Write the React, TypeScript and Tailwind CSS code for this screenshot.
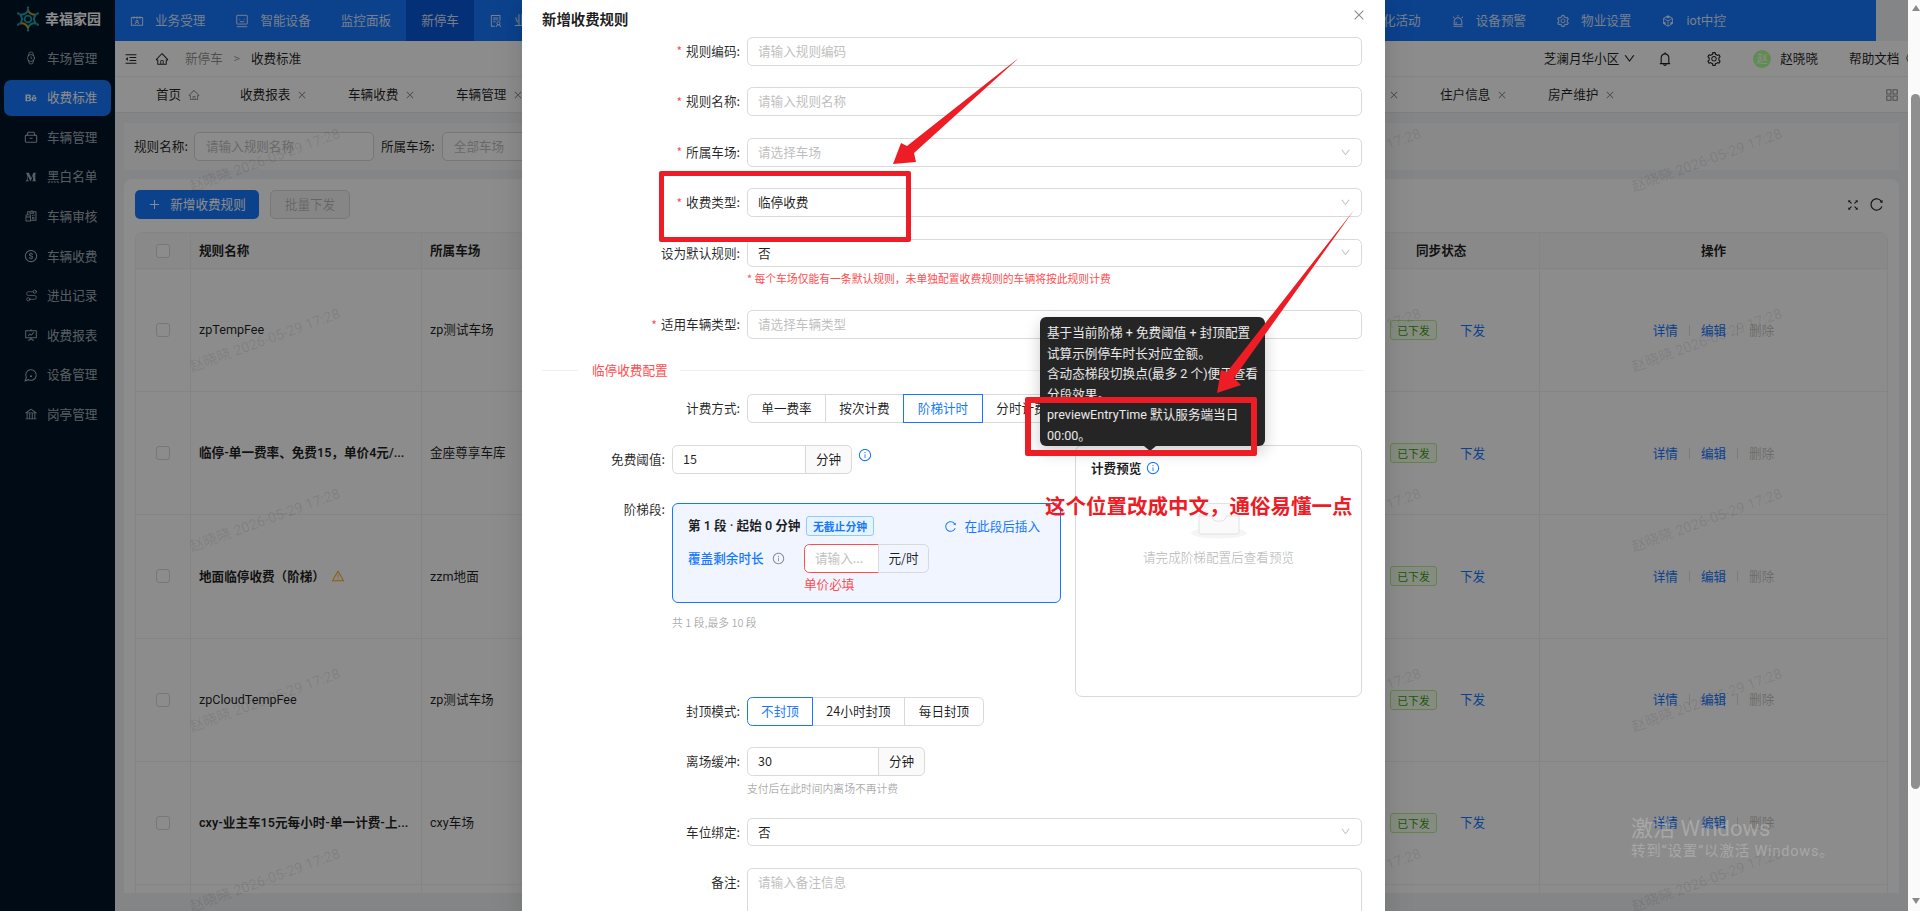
import type { ReactNode } from "react";
import {
  AiOutlineAlert, AiOutlineAppstore, AiOutlineBank, AiOutlineBehance, AiOutlineBell, AiOutlineCodeSandbox,
  AiOutlineClose, AiOutlineContacts, AiOutlineDollar, AiOutlineDown, AiOutlineFullscreen,
  AiOutlineFundProjectionScreen, AiOutlineHome, AiOutlineInfoCircle, AiOutlineMedium, AiOutlineMenuFold,
  AiOutlinePlus, AiOutlineReconciliation, AiOutlineReload,
  AiOutlineSetting, AiOutlineSolution, AiOutlineWarning,
} from "react-icons/ai";
import { Route as RouteIcon, Watch } from "lucide-react";

const latin = "font-['Roboto','Noto_Sans_CJK_SC',sans-serif]";

function CarIcon() {
  return (
    <svg width="14" height="14" viewBox="0 0 16 16" fill="none" stroke="currentColor" strokeWidth="1.2">
      <rect x="1.5" y="6" width="13" height="8" rx="1" />
      <path d="M3.5 6 L4.6 2.5 H11.4 L12.5 6 M6.3 9.5 H9.7" />
    </svg>
  );
}

function BubbleIcon() {
  return (
    <svg width="14" height="14" viewBox="0 0 24 24" fill="none" stroke="currentColor" strokeWidth="1.8">
      <path d="M7.9 20A9 9 0 1 0 4 16.1L2 22Z" />
      <circle cx="12" cy="14" r="0.8" fill="currentColor" />
    </svg>
  );
}

function FaceIcon() {
  return (
    <svg width="14" height="14" viewBox="0 0 16 16" fill="none" stroke="currentColor" strokeWidth="1.1">
      <rect x="2" y="1.5" width="12" height="10" rx="0.5" />
      <path d="M5 6 H5.8 M10.2 6 H11 M5.5 8.8 H10.5 M2 14.5 H14" />
    </svg>
  );
}

const sideItems = [
  { icon: <Watch size={14} strokeWidth={1.5} />, label: "车场管理" },
  { icon: <AiOutlineBehance size={14} />, label: "收费标准", active: true },
  { icon: <CarIcon />, label: "车辆管理" },
  { icon: <AiOutlineMedium size={14} />, label: "黑白名单" },
  { icon: <AiOutlineReconciliation size={14} />, label: "车辆审核" },
  { icon: <AiOutlineDollar size={14} />, label: "车辆收费" },
  { icon: <RouteIcon size={13} strokeWidth={1.5} />, label: "进出记录" },
  { icon: <AiOutlineFundProjectionScreen size={14} />, label: "收费报表" },
  { icon: <BubbleIcon />, label: "设备管理" },
  { icon: <AiOutlineBank size={14} />, label: "岗亭管理" },
];

const rows = [
  { name: "zpTempFee", lot: "zp测试车场" },
  { name: "临停-单一费率、免费15\uFF0C单价4元/...", lot: "金座尊享车库", bold: true },
  { name: "地面临停收费\uFF08阶梯\uFF09", lot: "zzm地面", bold: true, warn: true },
  { name: "zpCloudTempFee", lot: "zp测试车场" },
  { name: "cxy-业主车15元每小时-单一计费-上...", lot: "cxy车场", bold: true },
];

const marks = [160, 340, 520, 700, 880].flatMap((y) => [150, 511, 871, 1231, 1592].map((x) => ({ x, y })));

function Logo() {
  const petals = [0, 60, 120, 180, 240, 300];
  return (
    <svg width="26" height="26" viewBox="0 0 26 26" fill="none">
      <circle cx="13" cy="13" r="3.4" stroke="#1fa5ad" strokeWidth="1.8" />
      {petals.map((a, i) => (
        <path
          key={a}
          d="M8.6 5.4 Q13 8.6 17.4 5.4"
          stroke={i % 3 === 0 ? "#cf9a2e" : "#1fa5ad"}
          strokeWidth="2"
          strokeLinecap="round"
          transform={`rotate(${a + 30} 13 13)`}
        />
      ))}
      {petals.map((a) => (
        <circle key={a} cx="13" cy="1.8" r="1.2" fill="#1fa5ad" transform={`rotate(${a} 13 13)`} />
      ))}
    </svg>
  );
}

function Sidebar() {
  return (
    <aside className="w-[115px] shrink-0 bg-[#001529] text-[#ffffffa6]">
      <div className="h-[40px] pl-[15px] pt-[6px] flex items-start gap-[4px] text-white font-bold text-[14px]">
        <Logo />
        <span className="leading-[24px]">幸福家园</span>
      </div>
      <div className="px-[4px]">
        {sideItems.map((it) => (
          <div
            key={it.label}
            className={`h-[36px] mb-[3.6px] pl-[20px] flex items-center gap-[9px] rounded-[7px] ${it.active ? "bg-[#1677ff] text-white" : ""}`}
          >
            <span className="w-[14px] flex justify-center">{it.icon}</span>
            <span>{it.label}</span>
          </div>
        ))}
      </div>
    </aside>
  );
}

function NavItem({ icon, label, active }: { icon?: ReactNode; label: ReactNode; active?: boolean }) {
  return (
    <div className={`h-full px-[15px] flex items-center gap-[11px] whitespace-nowrap ${active ? "bg-[#0958d9]" : ""}`}>
      {icon}
      <span>{label}</span>
    </div>
  );
}

function TopNav() {
  return (
    <div className="h-[41px] w-[1761px] bg-[#1677ff] text-[#ffffffd9] flex justify-between pr-[135px]">
      <div className="flex">
        <NavItem icon={<AiOutlineContacts size={14} />} label="业务受理" />
        <NavItem icon={<FaceIcon />} label="智能设备" />
        <NavItem label="监控面板" />
        <NavItem label="新停车" active />
        <NavItem icon={<AiOutlineSolution size={14} />} label="业主服务" />
      </div>
      <div className="flex">
        <NavItem label="文化活动" />
        <NavItem icon={<AiOutlineAlert size={14} />} label="设备预警" />
        <NavItem icon={<AiOutlineSetting size={14} />} label="物业设置" />
        <NavItem icon={<AiOutlineCodeSandbox size={14} />} label={<span className={latin}>iot中控</span>} />
      </div>
    </div>
  );
}

function SubHeader() {
  return (
    <div className="h-[36px] bg-white border-b border-[#f0f0f0] flex items-center pl-[9px] whitespace-nowrap">
      <AiOutlineMenuFold size={14} className="text-[#000000d9]" />
      <AiOutlineHome size={14} className="ml-[17px] text-[#000000d9]" />
      <span className="ml-[16px] text-[#00000073]">新停车</span>
      <span className="ml-[11px] text-[#00000073] text-[11px]">&gt;</span>
      <span className="ml-[11px]">收费标准</span>
      <span className="ml-auto">芝澜月华小区</span>
      <AiOutlineDown size={13} className="ml-[4px]" />
      <AiOutlineBell size={16} className="ml-[21px]" />
      <AiOutlineSetting size={16} className="ml-[33px]" />
      <span className="ml-[31px] w-[18px] h-[18px] rounded-full bg-[#b0ff94] text-white text-[11px] flex items-center justify-center">赵</span>
      <span className="ml-[9px]">赵晓晓</span>
      <span className="ml-[31px] mr-[-4px]">帮助文档《</span>
    </div>
  );
}

function Tab({ label }: { label: string }) {
  return (
    <div className="w-[108px] pl-[24px] flex items-center gap-[7px]">
      <span>{label}</span>
      <AiOutlineClose size={10} className="text-[#00000073]" />
    </div>
  );
}

function TabBar() {
  return (
    <div className="h-[36px] bg-white border-b border-[#e8e8e8] flex whitespace-nowrap pl-[17px]">
      <div className="w-[84px] pl-[24px] flex items-center gap-[7px]">
        <span>首页</span>
        <AiOutlineHome size={12} className="text-[#00000073]" />
      </div>
      <Tab label="收费报表" />
      <Tab label="车辆收费" />
      <Tab label="车辆管理" />
      <div className="ml-auto flex">
        <Tab label="费用账单" />
        <Tab label="住户信息" />
        <Tab label="房产维护" />
      </div>
      <div className="w-[276px] flex items-center justify-end pr-[8px]">
        <AiOutlineAppstore size={16} className="text-[#00000073]" />
      </div>
    </div>
  );
}

function TableRow({ row }: { row: (typeof rows)[number] }) {
  return (
    <div className="flex h-[123.2px] border-b border-[#f0f0f0] items-stretch">
      <div className="w-[55px] border-r border-[#f0f0f0] flex items-center justify-center">
        <span className="w-[14px] h-[14px] rounded-[3px] border border-[#d9d9d9] bg-white" />
      </div>
      <div className={`w-[231px] border-r border-[#f0f0f0] pl-[8px] flex items-center gap-[6px] ${row.bold ? "font-semibold" : ""}`}>
        <div className="whitespace-nowrap"><span className={latin}>{row.name}</span></div>
        {row.warn && <AiOutlineWarning size={14} className="text-[#faad14]" />}
      </div>
      <div className="flex-1 pl-[8px] flex items-center">
        <div><span className={latin}>{row.lot}</span></div>
      </div>
      <div className="w-[160px] border-r border-[#f0f0f0] flex items-center pl-[10px] gap-[23px]">
        <span className="h-[20px] w-[47px] rounded-[3px] border border-[#b7eb8f] bg-[#f6ffed] text-[#389e0d] text-[10.8px] flex items-center justify-center">已下发</span>
        <span className="text-[#1677ff]">下发</span>
      </div>
      <div className="w-[347px] flex items-center justify-center gap-[11px]">
        <span className="text-[#1677ff]">详情</span>
        <span className="w-px h-[11px] bg-[#e0e0e0]" />
        <span className="text-[#1677ff]">编辑</span>
        <span className="w-px h-[11px] bg-[#e0e0e0]" />
        <span className="text-[#00000040]">删除</span>
      </div>
    </div>
  );
}

function Page() {
  return (
    <div className="flex-1 min-w-0 bg-[#f0f2f5] overflow-hidden h-[911px]">
      <TopNav />
      <SubHeader />
      <TabBar />
      <div className="px-[9px] pt-[10px]">
        <div className="h-[47px] bg-[#fafafa] flex items-center px-[10px] whitespace-nowrap">
          <span>规则名称:</span>
          <span className="ml-[6px] w-[180px] h-[29px] rounded-[5px] border border-[#d9d9d9] bg-white text-[#bfbfbf] px-[11px] flex items-center">请输入规则名称</span>
          <span className="ml-[7px]">所属车场:</span>
          <span className="ml-[7px] w-[180px] h-[29px] rounded-[5px] border border-[#d9d9d9] bg-white text-[#bfbfbf] px-[11px] flex items-center">全部车场</span>
        </div>
        <div className="mt-[9px] h-[714px] bg-white rounded-t-[8px] px-[11px] pt-[11px] overflow-hidden">
          <div className="flex items-center gap-[11px] h-[29px]">
            <span className="h-[29px] w-[124px] rounded-[5px] bg-[#1677ff] text-white flex items-center justify-center gap-[9px]">
              <AiOutlinePlus size={13} />新增收费规则
            </span>
            <span className="h-[29px] w-[80px] rounded-[5px] border border-[#d9d9d9] bg-[#f5f5f5] text-[#00000040] flex items-center justify-center">批量下发</span>
            <AiOutlineFullscreen size={14} className="ml-auto" />
            <AiOutlineReload size={15} className="mr-[4px] -ml-[2px]" />
          </div>
          <div className="mt-[13px] rounded-t-[8px] border-t border-x border-[#f0f0f0]">
            <div className="flex h-[36px] bg-[#fafafa] border-b border-[#f0f0f0] font-semibold">
              <div className="w-[55px] border-r border-[#f0f0f0] flex items-center justify-center">
                <span className="w-[14px] h-[14px] rounded-[3px] border border-[#d9d9d9] bg-white" />
              </div>
              <div className="w-[231px] border-r border-[#f0f0f0] pl-[8px] flex items-center">规则名称</div>
              <div className="flex-1 pl-[8px] flex items-center">所属车场</div>
              <div className="w-[160px] border-r border-[#f0f0f0] pl-[36px] flex items-center">同步状态</div>
              <div className="w-[347px] flex items-center justify-center">操作</div>
            </div>
            {rows.map((r) => <TableRow key={r.name} row={r} />)}
            <div className="flex h-[20px]">
              <div className="w-[55px] border-r border-[#f0f0f0]" />
              <div className="w-[231px] border-r border-[#f0f0f0]" />
              <div className="flex-1" />
              <div className="w-[160px] border-r border-[#f0f0f0]" />
              <div className="w-[347px]" />
            </div>
          </div>
        </div>
      </div>
    </div>
  );
}

function Label({ children, required, inner, top }: { children: ReactNode; required?: boolean; inner?: boolean; top?: boolean }) {
  return (
    <label className={`${inner ? "w-[150px]" : "w-[225px]"} ${top ? "h-[14px]" : "h-[28.8px]"} shrink-0 pr-[7px] flex items-center justify-end text-[#000000d9] whitespace-nowrap`}>
      {required && <span className="text-[#ff4d4f] mr-[4px] text-[12px]">*</span>}
      {children}:
    </label>
  );
}

function Field({ text, placeholder, select }: { text?: string; placeholder?: string; select?: boolean }) {
  return (
    <div className="w-[615px] h-[28.8px] rounded-[5.4px] border border-[#d9d9d9] bg-white px-[10px] flex items-center justify-between">
      {text ? <span>{text}</span> : <span className="text-[#bfbfbf]">{placeholder}</span>}
      {select && <AiOutlineDown size={11} className="text-[#bfbfbf]" />}
    </div>
  );
}

function FormRow(props: { label: string; required?: boolean; text?: string; placeholder?: string; select?: boolean }) {
  return (
    <div className="flex mb-[21.6px]">
      <Label required={props.required}>{props.label}</Label>
      <Field text={props.text} placeholder={props.placeholder} select={props.select} />
    </div>
  );
}

function Segmented({ items, widths, active }: { items: string[]; widths: string[]; active: number }) {
  return (
    <div className="flex h-[28.8px]">
      {items.map((it, i) => (
        <div
          key={it}
          className={`${widths[i]} -ml-px first:ml-0 first:rounded-l-[5.4px] last:rounded-r-[5.4px] border flex items-center justify-center whitespace-nowrap ${i === active ? "relative border-[#1677ff] text-[#1677ff]" : "border-[#d9d9d9]"}`}
        >
          {it}
        </div>
      ))}
    </div>
  );
}

function UnitInput({ value, inputW, unitW }: { value: string; inputW: string; unitW: string }) {
  return (
    <div className="flex h-[28.8px]">
      <div className={`${inputW} rounded-l-[5.4px] border border-[#d9d9d9] px-[10px] flex items-center`}>{value}</div>
      <div className={`${unitW} -ml-px rounded-r-[5.4px] border border-[#d9d9d9] bg-[#fafafa] flex items-center justify-center`}>分钟</div>
    </div>
  );
}

function TierBox() {
  return (
    <div className="w-[389px] h-[100px] rounded-[6px] border border-[#1677ff] bg-[#f0f5ff] pl-[15px] pr-[20px] pt-[12px]">
      <div className="flex items-center h-[21px] font-semibold whitespace-nowrap">
        <div className="w-[110px]"><span className={latin}>第 1 段 · 起始 0 分钟</span></div>
        <span className="ml-[8px] h-[20px] w-[68px] rounded-[3px] border border-[#91caff] bg-[#e6f4ff] text-[#1677ff] text-[10.8px] flex items-center justify-center">无截止分钟</span>
        <span className="ml-auto flex items-center gap-[7px] text-[#1677ff] font-normal">
          <AiOutlineReload size={13} />在此段后插入
        </span>
      </div>
      <div className="flex mt-[7px] h-[29px]">
        <div className="w-[116px] flex items-center gap-[8px] text-[#1677ff] font-medium whitespace-nowrap">
          覆盖剩余时长
          <AiOutlineInfoCircle size={13} className="text-[#00000073]" />
        </div>
        <div className="w-[75px] rounded-l-[5.4px] border border-[#ff4d4f] bg-white text-[#bfbfbf] pl-[10px] flex items-center">请输入...</div>
        <div className="w-[51px] -ml-px rounded-r-[5.4px] border border-[#d9d9d9] bg-[#f0f5ff] flex items-center justify-center">元/时</div>
      </div>
      <div className="ml-[116px] mt-[1px] text-[#ff4d4f] leading-[20px]">单价必填</div>
    </div>
  );
}

function PreviewCard() {
  return (
    <div className="w-[287px] h-[252px] rounded-[7px] border border-[#d9d9d9] pl-[15px] pt-[12px]">
      <div className="flex items-center gap-[5px] font-semibold h-[20px]">
        计费预览
        <AiOutlineInfoCircle size={14} className="text-[#1677ff] font-normal" />
      </div>
      <div className="-ml-[15px] mt-[24px] flex flex-col items-center">
        <svg width="58" height="38" viewBox="0 0 58 38" fill="none">
          <ellipse cx="29" cy="31" rx="28" ry="5.5" fill="#f5f5f5" />
          <path d="M9 14 L16 3 Q17 1.5 19 1.5 H39 Q41 1.5 42 3 L49 14 V30 Q49 32 47 32 H11 Q9 32 9 30 Z" fill="#fafafa" stroke="#e2e2e2" />
          <path d="M9 14 H21 Q22 14 22.5 16 Q23.5 19 26 19 H32 Q34.5 19 35.5 16 Q36 14 37 14 H49" fill="#fdfdfd" stroke="#e2e2e2" />
        </svg>
        <span className="mt-[8px] text-[#00000040]">请完成阶梯配置后查看预览</span>
      </div>
    </div>
  );
}

function Modal() {
  return (
    <div className="absolute left-[522px] top-0 w-[863px] h-[1100px] bg-white shadow-[0_6px_16px_rgba(0,0,0,0.08),0_9px_28px_8px_rgba(0,0,0,0.05)]">
      <div className="h-[37px] pl-[20px] flex items-center font-semibold text-[14.4px] text-[#000000e0]">新增收费规则</div>
      <AiOutlineClose size={14} className="absolute left-[830px] top-[8px] text-[#00000073]" />
      <FormRow required label="规则编码" placeholder="请输入规则编码" />
      <FormRow required label="规则名称" placeholder="请输入规则名称" />
      <FormRow required label="所属车场" placeholder="请选择车场" select />
      <FormRow required label="收费类型" text="临停收费" select />
      <div className="flex">
        <Label>设为默认规则</Label>
        <Field text="否" select />
      </div>
      <p className="pl-[225px] h-[43px] pt-[1px] leading-[20px] text-[10.8px] text-[#ff4d4f]">{"* 每个车场仅能有一条默认规则\uFF0C未单独配置收费规则的车辆将按此规则计费"}</p>
      <div className="flex">
        <Label required>适用车辆类型</Label>
        <Field placeholder="请选择车辆类型" />
      </div>
      <div className="mt-[21px] h-[20px] pl-[20px] flex items-center text-[#ff4d4f]">
        <span className="w-[36px] h-px bg-[#f0f0f0]" />
        <span className="pl-[14px] pr-[12px]">临停收费配置</span>
        <span className="w-[684px] h-px bg-[#f0f0f0]" />
      </div>
      <div className="mt-[14px] flex">
        <Label>计费方式</Label>
        <Segmented items={["单一费率", "按次计费", "阶梯计时", "分时计费"]} widths={["w-[79px]", "w-[79px]", "w-[80px]", "w-[79px]"]} active={2} />
      </div>
      <div className="mt-[22px] flex">
        <div className="w-[553px] h-[252px]">
          <div className="flex">
            <Label inner>免费阈值</Label>
            <UnitInput value="15" inputW="w-[134px]" unitW="w-[47px]" />
            <AiOutlineInfoCircle size={14} className="ml-[6px] mt-[3px] text-[#1677ff]" />
          </div>
          <div className="mt-[29px] flex">
            <Label inner top>阶梯段</Label>
            <TierBox />
          </div>
          <p className="pl-[150px] mt-[11px] text-[10.8px] text-[#00000059]">共 1 段,最多 10 段</p>
        </div>
        <PreviewCard />
      </div>
      <div className="flex">
        <Label>封顶模式</Label>
        <Segmented items={["不封顶", "24小时封顶", "每日封顶"]} widths={["w-[66px]", "w-[93px]", "w-[80px]"]} active={0} />
      </div>
      <div className="mt-[21px] flex">
        <Label>离场缓冲</Label>
        <UnitInput value="30" inputW="w-[132px]" unitW="w-[47px]" />
      </div>
      <p className="pl-[225px] h-[42px] pt-[4px] text-[10.8px] text-[#00000059]">支付后在此时间内离场不再计费</p>
      <div className="flex mb-[21.6px]">
        <Label>车位绑定</Label>
        <Field text="否" select />
      </div>
      <div className="flex">
        <Label>备注</Label>
        <div className="w-[615px] h-[90px] rounded-[5.4px] border border-[#d9d9d9] px-[10px] pt-[4px] text-[#bfbfbf]">请输入备注信息</div>
      </div>
    </div>
  );
}

function Tooltip() {
  return (
    <div className="absolute left-[1040px] top-[317px] w-[225px] h-[129px] rounded-[6px] bg-[#252525] text-white/90 shadow-[0_6px_16px_rgba(0,0,0,0.2)] px-[7px] pt-[5px] leading-[20px] whitespace-nowrap">
      <div><span className={latin}>基于当前阶梯 + 免费阈值 + 封顶配置</span></div>
      <div>试算示例停车时长对应金额。</div>
      <div><span className={latin}>含动态梯段切换点(最多 2 个)便于查看</span></div>
      <div>分段效果。</div>
      <div><span className={latin}>previewEntryTime 默认服务端当日</span></div>
      <div><span className={latin}>00:00。</span></div>
      <span className="absolute left-[104px] -bottom-[5px] w-0 h-0 border-x-[6px] border-x-transparent border-t-[5px] border-t-[#252525]" />
    </div>
  );
}

function Annotations() {
  return (
    <>
      <div className="absolute left-[659px] top-[171px] w-[252px] h-[71px] rounded-[2px] border-[5px] border-[#ee1c25]" />
      <div className="absolute left-[1025px] top-[397px] w-[232px] h-[59px] rounded-[2px] border-[6px] border-[#ee1c25]" />
      <span className="absolute left-[1045px] top-[491px] text-[20.5px] leading-[28px] font-bold text-[#ee1c25] whitespace-nowrap">{"这个位置改成中文\uFF0C通俗易懂一点"}</span>
      <svg className="absolute left-0 top-0" width="1920" height="911" fill="#ee1c25">
        <polygon points="1020,57 914,153 916,162 893,164 901,143 907,146" />
        <polygon points="1354,210 1234,378 1241,385 1217,393 1221,370 1227,372" />
      </svg>
    </>
  );
}

function Scrollbar() {
  return (
    <div className="w-[12px] shrink-0 bg-[#fafafa] flex flex-col items-center h-[911px] pl-[3px]">
      <span className="mt-[5px] w-0 h-0 border-x-[4px] border-x-transparent border-b-[6px] border-b-[#8a8a8a]" />
      <span className="mt-[83px] w-[9px] h-[695px] rounded-[5px] bg-[#8f8f8f]" />
      <span className="mt-[109px] w-0 h-0 border-x-[4px] border-x-transparent border-t-[6px] border-t-[#8a8a8a]" />
    </div>
  );
}

export default function App() {
  return (
    <div className="relative w-[1920px] h-[911px] overflow-hidden flex text-[12.6px] text-[#000000e0] font-['Noto_Sans_CJK_SC',sans-serif]">
      <div className="relative w-[1908px] flex overflow-hidden">
        <Sidebar />
        <div className="relative flex-1 min-w-0 flex">
          <Page />
          {marks.map((m) => (
            <span
              key={`${m.x}-${m.y}`}
              className={`absolute text-[14.4px] text-black/10 whitespace-nowrap -rotate-[20deg] pointer-events-none w-[170px] text-center ${latin}`}
              style={{ left: m.x - 85, top: m.y - 10 }}
            >
              赵晓晓 2026-05-29 17:28
            </span>
          ))}
        </div>
        <div className="absolute inset-0 bg-black/45" />
        <Modal />
      </div>
      <Scrollbar />
      <Tooltip />
      <Annotations />
      <span className={`absolute left-[1631px] top-[815px] text-[22px] leading-[28px] text-white/25 whitespace-nowrap ${latin}`}>激活 Windows</span>
      <span className={`absolute left-[1631px] top-[842px] text-[14.5px] leading-[20px] tracking-[0.8px] text-white/25 whitespace-nowrap ${latin}`}>{"转到\u201C设置\u201D以激活 Windows。"}</span>
    </div>
  );
}
